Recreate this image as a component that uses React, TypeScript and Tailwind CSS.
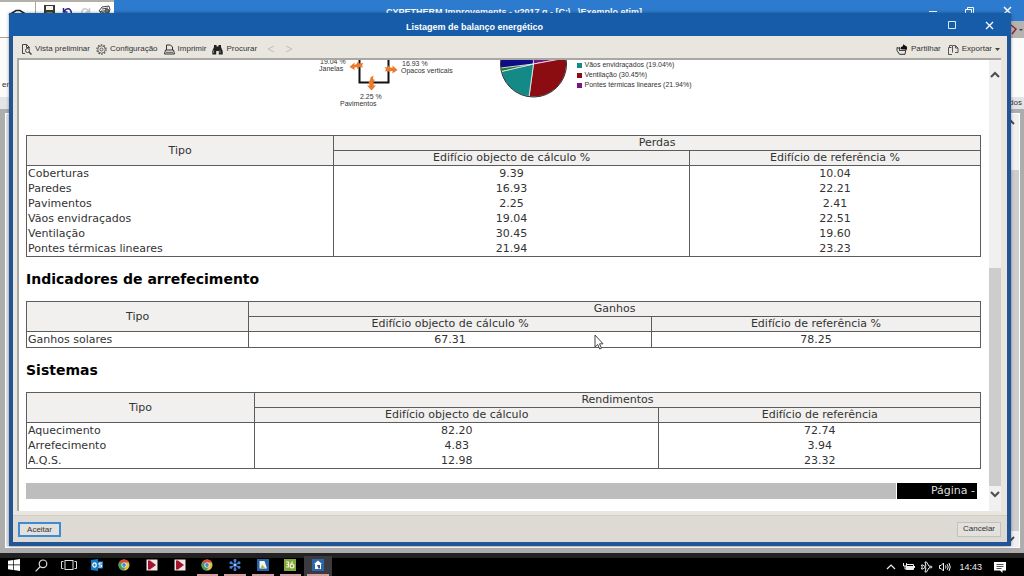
import type { ReactNode } from "react";

interface ReportTableProps {
    group: string;
    columns: [string, string];
    widths: [string, string, string];
    rows: [string, string, string][];
}

const losses: [string, string, string][] = [
    ["Coberturas", "9.39", "10.04"],
    ["Paredes", "16.93", "22.21"],
    ["Pavimentos", "2.25", "2.41"],
    ["Vãos envidraçados", "19.04", "22.51"],
    ["Ventilação", "30.45", "19.60"],
    ["Pontes térmicas lineares", "21.94", "23.23"],
];

const systems: [string, string, string][] = [
    ["Aquecimento", "82.20", "72.74"],
    ["Arrefecimento", "4.83", "3.94"],
    ["A.Q.S.", "12.98", "23.32"],
];

const legend = [
    { label: "Vãos envidraçados (19.04%)", color: "bg-[#138a86]" },
    { label: "Ventilação (30.45%)", color: "bg-[#8b0d12]" },
    { label: "Pontes térmicas lineares (21.94%)", color: "bg-[#7d1283]" },
];

const ReportTable = ({ group, columns, widths, rows }: ReportTableProps) => {
    const head = "border border-[#5c5c5c] bg-[#f1f0ef] p-0 font-normal";
    const cell = "border-x border-[#5c5c5c] p-0";
    return (
        <table className="w-full table-fixed border-collapse border border-[#5c5c5c] text-[11px] leading-[15px] text-[#333]">
            <colgroup>
                <col className={widths[0]} />
                <col className={widths[1]} />
                <col className={widths[2]} />
            </colgroup>
            <thead className="leading-[14px]">
                <tr>
                    <th rowSpan={2} className={head}>Tipo</th>
                    <th colSpan={2} className={head}>{group}</th>
                </tr>
                <tr>
                    <th className={head}>{columns[0]}</th>
                    <th className={head}>{columns[1]}</th>
                </tr>
            </thead>
            <tbody>
                {rows.map((row) => (
                    <tr key={row[0]}>
                        <td className={cell + " pl-px"}>{row[0]}</td>
                        <td className={cell + " text-center"}>{row[1]}</td>
                        <td className={cell + " text-center"}>{row[2]}</td>
                    </tr>
                ))}
            </tbody>
        </table>
    );
};

const ToolButton = ({ icon, children }: { icon: ReactNode; children: ReactNode }) => (
    <button type="button" className="flex items-center gap-[3px] whitespace-nowrap">
        {icon}
        {children}
    </button>
);

const PreviewIcon = () => (
    <svg className="size-[11px]" viewBox="0 0 11 11" fill="none" stroke="#444">
        <path d="M4 9.5H1.5v-9h4l3 3v1M5.5.5v3h3" />
        <circle cx="6.5" cy="6.5" r="2" />
        <path d="M8 8l2.5 2.5" strokeWidth="1.5" />
    </svg>
);

const GearIcon = () => (
    <svg className="size-[11px]" viewBox="0 0 11 11" fill="none" stroke="#555">
        <circle cx="5.5" cy="5.5" r="4.6" strokeWidth="1.2" strokeDasharray="1.6 1.3" />
        <circle cx="5.5" cy="5.5" r="3.7" strokeWidth=".8" />
        <circle cx="5.5" cy="5.5" r="1.5" strokeWidth=".9" />
    </svg>
);

const PrintIcon = () => (
    <svg className="size-[11px]" viewBox="0 0 11 11" fill="none" stroke="#333">
        <path d="M2.5 6V1h4l2 2v3" />
        <path d="M1.5 6h8l1 4H.5z" />
        <path d="M2 8.3h7" strokeWidth=".8" />
    </svg>
);

const FindIcon = () => (
    <svg className="size-[11px]" viewBox="0 0 11 11" fill="#222">
        <path d="M2 1h2.5v1.5h2V1H9v2l1.7 4v3.5H6.8V7H4.2v3.5H.3V7L2 3z" />
        <path d="M1.6 6.2v3M8 6.2v3" stroke="#aaa" strokeWidth=".7" />
    </svg>
);

// hand holding a card with an arrow
const ShareIcon = () => (
    <svg className="h-[11px] w-3" viewBox="0 0 12 11" fill="none" stroke="#333">
        <path d="M3.500 4.500L1 3.500v3L3.500 10.300h5.500l1-5.300" />
        <path d="M4 6.500h5.500M3.500 3v4" strokeWidth=".9" />
        <path d="M4.500 5.200c0-2 .8-3 2.500-3V.3l4 2.400v2.800h-3z" fill="#111" stroke="none" />
    </svg>
);

const ExportIcon = () => (
    <svg className="h-[11px] w-3" viewBox="0 0 12 11" fill="none" stroke="#555">
        <path d="M5 10.500H1.500v-7h3M2.500 3.500v-2h2.500" />
        <path d="M5.500 8.500v-7h3l2.500 2.500v4.500H8M8.500 1.500V4H11" />
    </svg>
);

const Chevron = ({ d, label }: { d: string; label: string }) => (
    <button type="button" aria-label={label} className="flex h-4 w-full items-center justify-center">
        <svg className="h-2 w-[10px]" viewBox="0 0 10 8" fill="none" stroke="#4c4c4c" strokeWidth="2">
            <path d={d} />
        </svg>
    </button>
);

// lower half of the building scheme, the rest is scrolled out of view
const HouseDiagram = () => (
    <svg
        className="h-[50px] w-[150px] shrink-0 font-['Liberation_Sans',Arial,sans-serif]"
        viewBox="314 60 150 50"
        fontSize="7"
        fill="#333"
    >
        <path d="M360.500 58v24.500h29V58" fill="none" stroke="#111" strokeWidth="2" />
        <g fill="#ec7a2c">
            <path d="M350.500 67l5-4.500v2.500l2-1 1-2 2 1.500 4-.5-1.500 2.500 1 2-3.500-.5-2 2-1-2-2 .5v2.500z" />
            <path d="M398.500 70l-5-4.500v2.500l-2-.5-2-2-1 2-3-.5 1.500 2-1 2.500 3-.5 1.500 1.500 1-1.500h2v2.500z" />
            <path d="M372.500 90.500l-4.500-5h2.500v-2l-1.500-2 2-1 .5-3 3-2-.5 3.500 2 1-2 1.500 1 1.500-.5 2.500h2.500z" />
        </g>
        <text x="321" y="64">19.04 %</text>
        <text x="320" y="71">Janelas</text>
        <text x="403" y="66">16.93 %</text>
        <text x="402" y="73">Opacos verticais</text>
        <text x="361" y="99">2.25 %</text>
        <text x="341" y="106">Pavimentos</text>
    </svg>
);

const LossesPie = () => (
    <svg className="h-10 w-[70px] shrink-0" viewBox="500 60 70 40">
        <circle cx="534.500" cy="64" r="33" fill="#0d0d86" />
        <g stroke="#e8e8e8" strokeWidth=".9">
            <path d="M534.500 64L533 31a33 33 0 0 1 34 27z" fill="#7d1283" />
            <path d="M534.500 64L567 58a33 33 0 0 1-37 38.700z" fill="#8b0d12" />
            <path d="M534.500 64L530 96.700a33 33 0 0 1-27.700-25.200z" fill="#138a86" />
            <path d="M534.500 64l-32.200 7.500-.8-3.500z" fill="#1b7a2c" />
        </g>
        <circle cx="534.500" cy="64" r="33" fill="none" stroke="#333" />
    </svg>
);

const Chrome = () => (
    <svg className="size-3" viewBox="0 0 12 12">
        <circle cx="6" cy="6" r="5.500" fill="#e3c044" />
        <path d="M6 6L1.200 3.200A5.500 5.500 0 0 1 10.900 3.500H6z" fill="#d8483b" />
        <path d="M6 6L1.200 3.200A5.500 5.500 0 0 0 5.500 11.500L8.200 7.200z" fill="#3f9e57" />
        <circle cx="6" cy="6" r="2.600" fill="#f2f2f2" />
        <circle cx="6" cy="6" r="1.900" fill="#4a86d8" />
    </svg>
);

const Player = () => (
    <svg className="size-3" viewBox="0 0 12 12">
        <rect x=".5" y=".5" width="11" height="11" fill="#f3e6e6" />
        <path d="M2 1.500h2l6 4.500-6 4.500H2z" fill="#a3142f" />
    </svg>
);

const taskbar = [
    {
        name: "Iniciar",
        open: false,
        icon: (
            <svg className="size-3" viewBox="0 0 12 12" fill="#fff">
                <path d="M0 1.700l5-.7v4.600H0zM5.700.9L12 0v5.600H5.700zM0 6.300h5V11l-5-.7zM5.700 6.300H12V12l-6.300-.9z" />
            </svg>
        ),
    },
    {
        name: "Pesquisar",
        open: false,
        icon: (
            <svg className="size-[13px]" viewBox="0 0 13 13" fill="none" stroke="#ddd" strokeWidth="1.200">
                <circle cx="8" cy="4.800" r="3.800" />
                <path d="M5.300 7.500L.6 12.400" />
            </svg>
        ),
    },
    {
        name: "Vista de tarefas",
        open: false,
        icon: (
            <svg className="h-3 w-4" viewBox="0 0 16 12" fill="none" stroke="#ddd">
                <rect x="4" y="1.500" width="8" height="9" />
                <path d="M2.500 2.500h-2v7h2M13.500 2.500h2v7h-2" />
            </svg>
        ),
    },
    {
        name: "Outlook",
        open: false,
        icon: (
            <svg className="size-3" viewBox="0 0 12 12">
                <path d="M6 2.500h6v7H6z" fill="#1b76bf" />
                <path d="M11 4H8v2h2.500v2H7.500" fill="none" stroke="#fff" />
                <path d="M0 1l7-1v12l-7-1z" fill="#1679c4" />
                <ellipse cx="3.500" cy="6" rx="1.700" ry="2.100" fill="none" stroke="#fff" strokeWidth="1.200" />
            </svg>
        ),
    },
    { name: "Chrome", open: false, icon: <Chrome /> },
    { name: "Leitor", open: false, icon: <Player /> },
    { name: "Leitor 2", open: false, icon: <Player /> },
    { name: "Chrome 2", open: true, icon: <Chrome /> },
    {
        name: "Reunião",
        open: true,
        icon: (
            <svg className="size-3" viewBox="0 0 12 12" stroke="#4a7fd6" strokeWidth="1.300" fill="#4a7fd6">
                <path d="M6 1v10M1.700 3.500l8.600 5M10.300 3.500l-8.600 5" />
                <circle cx="6" cy="1.500" r=".9" />
                <circle cx="6" cy="10.500" r=".9" />
                <circle cx="2" cy="3.700" r=".9" />
                <circle cx="10" cy="3.700" r=".9" />
                <circle cx="2" cy="8.300" r=".9" />
                <circle cx="10" cy="8.300" r=".9" />
                <circle cx="6" cy="6" r="1" fill="#cfe0ff" stroke="none" />
            </svg>
        ),
    },
    {
        name: "CYPETHERM",
        open: true,
        icon: (
            <svg className="size-3" viewBox="0 0 12 12">
                <rect width="12" height="12" fill="#2862a6" />
                <path d="M2.500 2h5L10 9.500H2.500z" fill="#f2f4ee" />
                <path d="M5 5.500l3.500 4h-5z" fill="#b7b44f" />
            </svg>
        ),
    },
    {
        name: "Editor",
        open: true,
        icon: (
            <svg className="size-3" viewBox="0 0 12 12">
                <rect width="12" height="12" fill="#86a83a" />
                <g fill="none" stroke="#eef3dc" strokeWidth="1.200">
                    <path d="M2 3h2.500v2.500H2.500M4.500 5.500V8H2" />
                    <circle cx="8" cy="7" r="1.900" />
                    <path d="M6.500 6L8.500 2.500" />
                </g>
            </svg>
        ),
    },
    {
        name: "CYPETHERM Improvements",
        open: true,
        icon: (
            <svg className="size-3" viewBox="0 0 12 12">
                <rect width="12" height="12" fill="#2a66ad" />
                <path d="M6 1.500l4 3.500H9v5H3V5H2z" fill="#fff" />
                <path d="M5 6h3v3.500H6.500z" fill="#3b4c8f" />
            </svg>
        ),
    },
];

const MainWindow = () => (
    <div className="flex min-h-0 flex-1 flex-col bg-[#adadad]">
        <div className="flex h-[38px] shrink-0 items-start bg-[#2d7bce]">
            <div className="flex h-full w-[114px] items-start border-t-2 border-[#b3b0ac] bg-white">
                <div className="flex h-full w-9 items-start justify-center border-r border-b border-[#aaa594] pt-[7px]">
                    <svg className="h-2 w-5" viewBox="0 0 20 8" fill="none" stroke="#222" strokeWidth="1.500">
                        <path d="M1 6l7-4.500h4L19 6" />
                    </svg>
                </div>
                <div className="flex flex-1 items-start justify-around pt-[3px] pl-1">
                    <svg className="size-[11px]" viewBox="0 0 11 11">
                        <path d="M0 0h11v11H0z" fill="#3a3a35" />
                        <path d="M2 1h7v4H2z" fill="#f4f4e8" />
                        <path d="M2.500 7h6v4h-6z" fill="#8d8a5b" />
                    </svg>
                    <svg className="size-[11px]" viewBox="0 0 11 11" fill="none" stroke="#23238e" strokeWidth="1.500">
                        <path d="M1.500 3v4h4M2 6.500C5 2 9 3 9.500 9" />
                    </svg>
                    <svg className="size-[11px]" viewBox="0 0 11 11" fill="none" stroke="#c9c9d2" strokeWidth="1.500">
                        <path d="M9.500 3v4h-4M9 6.500C6 2 2 3 1.500 9" />
                    </svg>
                    <svg className="h-[11px] w-[13px]" viewBox="0 0 13 11" fill="none" stroke="#444">
                        <path d="M1 6l3-4 7-1 1 4-3 4zM4 4l6-1M3 6h8v4H2z" />
                        <circle cx="9" cy="6" r="2" fill="#777" />
                    </svg>
                </div>
            </div>
            <h1 className="min-w-0 flex-1 truncate pt-[6px] pl-[154px] text-center text-[9px] leading-[12px] font-bold text-white">
                CYPETHERM Improvements - v2017.g - [C:\...\Exemplo.etim]
            </h1>
            <div className="relative flex h-full w-[264px] justify-end gap-7 pt-[6px] pr-3">
                <svg className="h-[10px] w-2" viewBox="0 0 8 10" stroke="#fff">
                    <path d="M0 5.500h8" />
                </svg>
                <svg className="size-[10px]" viewBox="0 0 10 10" fill="none" stroke="#fff">
                    <path d="M.5 3.500h6v6h-6zM2.500 3.500v-2h6v6h-2" />
                </svg>
                <svg className="size-[9px]" viewBox="0 0 9 9" stroke="#fff" strokeWidth="1.500">
                    <path d="M1 1l7 7M8 1L1 8" />
                </svg>
                <div className="absolute right-0 bottom-0 flex h-[17px] w-4 items-center bg-[#b5b3b2]">
                    <svg className="size-full" viewBox="0 0 16 17" fill="none" stroke="#8e2338" strokeWidth="1.500">
                        <path d="M3 4l5 4-4 5" />
                        <path d="M11 8h4l-2 2z" fill="#444" stroke="none" />
                    </svg>
                </div>
            </div>
        </div>
        <div className="flex h-[59px] shrink-0 items-end justify-between bg-[#fbfbfa] pb-[7px] text-[8px] leading-[10px] text-[#333]">
            <span className="pl-[2px]">energia</span>
        </div>
        <div className="flex h-[12px] shrink-0 items-center justify-end bg-[#e4e4e6] pr-[2px] text-[8px] leading-[10px] text-[#333]">
            Resultados
        </div>
        <div className="mt-1 mr-1 mb-[5px] ml-[5px] flex flex-1 justify-end border border-white bg-[#e4e4e8]">
            <div className="flex w-4 flex-col justify-between bg-[#cdcdcf]">
                <div className="h-14 bg-[#f0f0f0]">
                    <Chevron d="M2 6l3-3 3 3" label="Subir lista" />
                </div>
                <div className="bg-[#f0f0f0]">
                    <Chevron d="M2 2l3 3 3-3" label="Descer lista" />
                </div>
            </div>
        </div>
    </div>
);

const Report = () => (
    <main className="min-w-0 flex-1 overflow-hidden bg-white pr-2 pl-[7px] font-['DejaVu_Sans',Verdana,sans-serif]">
        <div className="flex h-[75px] items-start pl-[30%]">
            <HouseDiagram />
            <div className="ml-9 flex items-start gap-2">
                <LossesPie />
                <ul className="font-['Liberation_Sans',Arial,sans-serif] text-[7px] leading-[10px] text-[#333]">
                    {legend.map((item) => (
                        <li key={item.label} className="flex items-center gap-[3px] whitespace-nowrap">
                            <span className={"size-[5px] " + item.color} />
                            {item.label}
                        </li>
                    ))}
                </ul>
            </div>
        </div>
        <ReportTable
            group="Perdas"
            columns={["Edifício objecto de cálculo %", "Edifício de referência %"]}
            widths={["w-[32.2%]", "w-[37.3%]", "w-[30.5%]"]}
            rows={losses}
        />
        <h2 className="py-[12px] text-[14px] leading-5 font-bold text-black">Indicadores de arrefecimento</h2>
        <ReportTable
            group="Ganhos"
            columns={["Edifício objecto de cálculo %", "Edifício de referência %"]}
            widths={["w-[23.3%]", "w-[42.2%]", "w-[34.5%]"]}
            rows={[["Ganhos solares", "67.31", "78.25"]]}
        />
        <h2 className="py-[12px] text-[14px] leading-5 font-bold text-black">Sistemas</h2>
        <ReportTable
            group="Rendimentos"
            columns={["Edifício objecto de cálculo", "Edifício de referência"]}
            widths={["w-[23.9%]", "w-[42.4%]", "w-[33.7%]"]}
            rows={systems}
        />
        <div className="mt-[14px] mr-1 flex h-4 gap-px text-[11px] leading-4">
            <div className="flex-1 bg-[#bdbdbd]" />
            <p className="w-20 bg-black pr-[2px] text-right text-[#ddd]">Página -</p>
        </div>
    </main>
);

const ReportDialog = () => (
    <section
        aria-label="Listagem de balanço energético"
        className="absolute top-[13px] right-[13px] bottom-[30px] left-[9px] flex flex-col border-4 border-t-0 border-[#215596] bg-[#e9e6e0] shadow-[0_0_3px_#0006]"
    >
        <header className="-mx-1 flex h-[23px] shrink-0 items-center bg-[#165ca9] pr-[17px] text-white">
            <h2 className="flex-1 pt-[4px] pr-2 text-center text-[9px] leading-[12px] font-bold">Listagem de balanço energético</h2>
            <div className="flex items-center gap-7 pt-[2px]">
                <button type="button" aria-label="Maximizar">
                    <svg className="size-[9px]" viewBox="0 0 9 9" fill="none" stroke="#dce9f7">
                        <path d="M.5.5h7v7h-7z" />
                    </svg>
                </button>
                <button type="button" aria-label="Fechar">
                    <svg className="size-[9px]" viewBox="0 0 9 9" stroke="#fff" strokeWidth="1.300">
                        <path d="M1 1l7 7M8 1L1 8" />
                    </svg>
                </button>
            </div>
        </header>
        <div className="flex h-[22px] shrink-0 items-center justify-between pt-1 pr-[7px] pl-2 text-[8px] leading-[12px] text-[#333]">
            <div className="flex items-center gap-[6px]">
                <ToolButton icon={<PreviewIcon />}>Vista preliminar</ToolButton>
                <ToolButton icon={<GearIcon />}>Configuração</ToolButton>
                <ToolButton icon={<PrintIcon />}>Imprimir</ToolButton>
                <ToolButton icon={<FindIcon />}>Procurar</ToolButton>
                <button type="button" disabled aria-label="Anterior">
                    <svg className="ml-1 h-2 w-2" viewBox="0 0 8 8" fill="none" stroke="#c2bfba">
                        <path d="M7 1L1 4l6 3" />
                    </svg>
                </button>
                <button type="button" disabled aria-label="Seguinte">
                    <svg className="ml-1 h-2 w-2" viewBox="0 0 8 8" fill="none" stroke="#c2bfba">
                        <path d="M1 1l6 3-6 3" />
                    </svg>
                </button>
            </div>
            <div className="flex items-center gap-[6px]">
                <ToolButton icon={<ShareIcon />}>Partilhar</ToolButton>
                <ToolButton icon={<ExportIcon />}>
                    Exportar
                    <svg className="h-[3px] w-[5px]" viewBox="0 0 5 3" fill="#444">
                        <path d="M0 0h5L2.500 3z" />
                    </svg>
                </ToolButton>
            </div>
        </div>
        <div className="mr-[6px] ml-1 flex min-h-0 flex-1 border-t-2 border-l-2 border-[#a9a7a4]">
            <Report />
            <div className="flex w-3 flex-col bg-[#f0f0f0] pt-[7px] pb-[9px]">
                <Chevron d="M1 6l4-4 4 4" label="Subir" />
                <div className="flex flex-1 flex-col justify-end">
                    <div className="h-[54%] bg-[#cdcdcd]" />
                </div>
                <Chevron d="M1 2l4 4 4-4" label="Descer" />
            </div>
        </div>
        <footer className="mt-1 flex h-[27px] shrink-0 items-center justify-between border-t border-[#d2cec7] bg-[#dddad3] pr-[6px] pl-[5px] text-[8px] text-[#333]">
            <button type="button" className="h-[15px] w-[43px] border-2 border-[#3d8bd4] bg-[#e3e1dd] leading-[11px]">
                Aceitar
            </button>
            <button type="button" className="h-[15px] w-[44px] border border-[#c4c2be] bg-[#e3e1dd] leading-[12px]">
                Cancelar
            </button>
        </footer>
    </section>
);

const Taskbar = () => (
    <nav className="flex h-[23px] shrink-0 items-stretch justify-between border-t-[5px] border-[#232021] bg-black">
        <div className="-mt-[2px] grid w-[332px] grid-cols-12">
            {taskbar.map((app, i) => (
                <button
                    key={app.name}
                    type="button"
                    aria-label={app.name}
                    className={
                        "flex items-center justify-center " +
                        (i === taskbar.length - 1 ? "bg-[#3b3b3f]" : "")
                    }
                >
                    <span
                        className={
                            "mx-[3px] flex h-full flex-1 items-center justify-center border-b-2 " +
                            (app.open ? "border-[#d79ea4]" : "border-transparent")
                        }
                    >
                        {app.icon}
                    </span>
                </button>
            ))}
        </div>
        <div className="flex items-center gap-[6px] pr-[18px] text-[#eee]">
            <svg className="h-[10px] w-3" viewBox="0 0 12 10" fill="none" stroke="#eee" strokeWidth="1.200">
                <path d="M2 7l4-4 4 4" />
            </svg>
            <svg className="h-[10px] w-3" viewBox="0 0 12 10" fill="none" stroke="#eee">
                <path d="M3.500 2.500h7v5h-7z" />
                <path d="M4 4h6.500v3.500H4zM11 4h1v2h-1z" fill="#eee" stroke="none" />
                <path d="M.5 1v3h3V1M2 4v3h2" />
            </svg>
            <svg className="h-3 w-3" viewBox="0 0 12 12" fill="none" stroke="#eee">
                <path d="M.5 4h1.500l1 1.200h2L4 1h1.500l2.500 4.200h2.500q1 .8 0 1.600H8L5.500 11H4l1-4.200H3L2 8H.5l.7-2z" />
            </svg>
            <svg className="h-[10px] w-3" viewBox="0 0 12 10" fill="none" stroke="#eee">
                <path d="M.5 3.500h1.500L4.500 1v8L2 6.500H.5zM6.500 3.500q1 1.500 0 3M8.200 2.200q2 2.800 0 5.600M10 1q2.500 4 0 8" />
            </svg>
            <time className="px-[2px] text-[9px] leading-[12px]">14:43</time>
            <svg className="ml-1 h-[11px] w-3" viewBox="0 0 12 11" fill="#fff">
                <path d="M0 0h12v8.500H8.500V11L6 8.500H0z" />
                <path d="M2.500 2.500h7M2.500 4.500h7M2.500 6.500h5" stroke="#222" strokeWidth=".8" />
            </svg>
        </div>
    </nav>
);

const App = () => {
    return (
        <div className="relative flex h-screen flex-col overflow-hidden font-['Liberation_Sans',Arial,sans-serif]">
            <MainWindow />
            <ReportDialog />
            <Taskbar />
            <svg className="absolute top-[58%] left-[58%] h-4 w-[10px]" viewBox="0 0 10 16" fill="#fff" stroke="#444">
                <path d="M1 1v12l2.700-2.500 2 4.500 1.800-.8-2-4.400H9z" />
            </svg>
        </div>
    );
};

export default App;
